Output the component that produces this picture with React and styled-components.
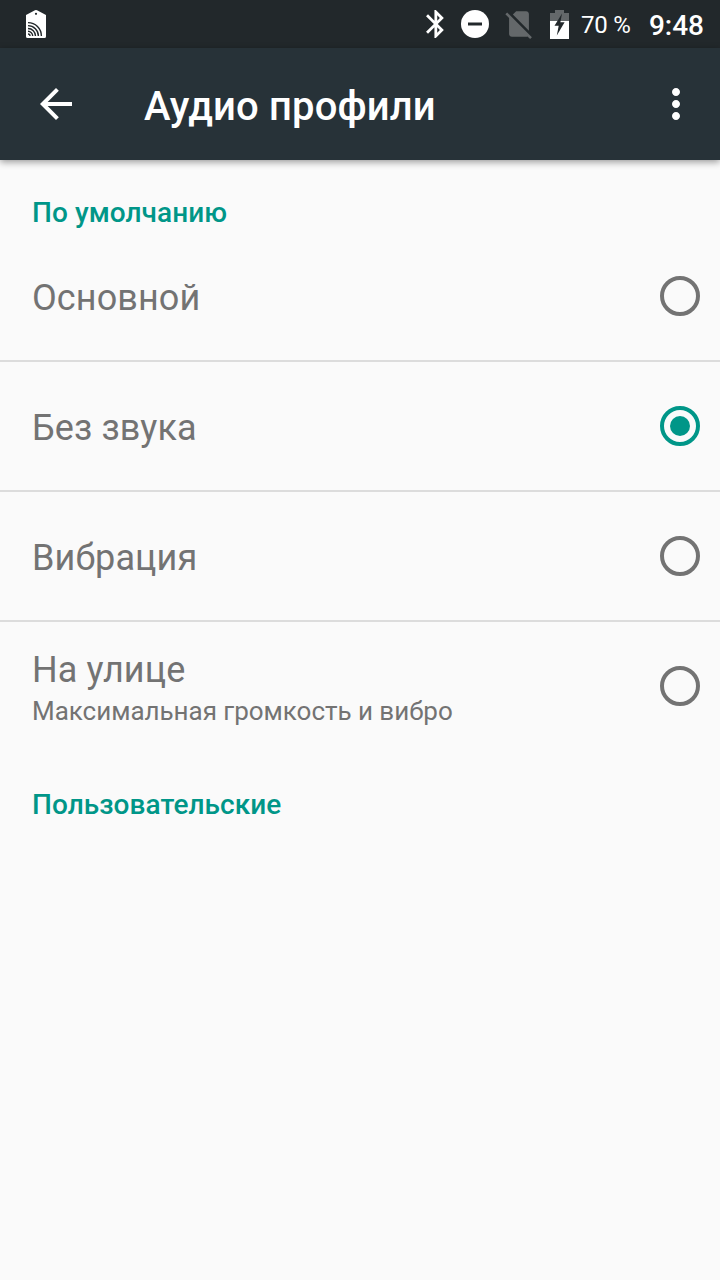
import React, { useState } from 'react'
import styled, { createGlobalStyle } from 'styled-components'


const GlobalStyle = createGlobalStyle`
    * {
        box-sizing: border-box;
    }
    body {
        margin: 0;
        background-color: #fafafa;
        font-family: Roboto, "Noto Sans", sans-serif;
    }
`;

const Container = styled.div`
    min-height: 100vh;
    background-color: #fafafa;
`;

const StatusBar = styled.div`
    height: 48px;
    padding: 0 16px 0 26px;
    display: flex;
    align-items: center;
    justify-content: space-between;
    background-color: #22282b;
    color: #fff;
`;

const StatusIcons = styled.div`
    display: flex;
    align-items: center;
`;

const Icon = styled.svg`
    display: block;
    flex: none;
    margin-left: ${props => props.$gap || 0}px;
`;

const BatteryLevel = styled.span`
    margin-left: 12px;
    padding-top: 2px;
    width: 50px;
    white-space: nowrap;
    font-size: 24px;
    line-height: 28px;
    letter-spacing: -0.2px;
`;

const Clock = styled.span`
    margin-left: 18px;
    padding-top: 2px;
    font-size: 28px;
    font-weight: 500;
    line-height: 33px;
`;

const Toolbar = styled.header`
    position: relative;
    height: 112px;
    padding: 0 38px 0 40px;
    display: flex;
    align-items: center;
    background-color: #273238;
    box-shadow: 0 2px 7px rgba(0, 0, 0, 0.4);
`;

const IconButton = styled.button`
    padding: 0;
    border: none;
    background: none;
    cursor: pointer;
`;

const Title = styled.h1`
    flex: 1;
    margin: 0;
    padding: 6px 0 0 72px;
    color: #fff;
    font-size: 40px;
    font-weight: 500;
    line-height: 46px;
    letter-spacing: 0.15px;
`;

const SectionTitle = styled.h2`
    height: 72px;
    margin: 0;
    padding: 36px 32px 0;
    color: #009688;
    font-size: 28px;
    font-weight: 500;
    line-height: 33px;
    letter-spacing: 0.06px;
`;

const Row = styled.div`
    height: 130px;
    padding: 0 20px 0 32px;
    display: flex;
    align-items: center;
    border-bottom: 2px solid ${props => props.$last ? 'transparent' : '#dcdcdc'};
    cursor: pointer;
`;

const Info = styled.div`
    flex: 1;
    padding-top: 3px;
    color: #737373;
`;

const Name = styled.div`
    font-size: 36px;
    line-height: 42px;
    letter-spacing: 0.1px;
`;

const Summary = styled.div`
    margin-top: 4px;
    font-size: 26px;
    line-height: 32px;
    letter-spacing: -0.03px;
`;

const Radio = styled.span`
    width: 40px;
    height: 40px;
    display: flex;
    align-items: center;
    justify-content: center;
    border: 4px solid ${props => props.$checked ? '#009688' : '#737373'};
    border-radius: 50%;
`;

const Dot = styled.span`
    width: 20px;
    height: 20px;
    border-radius: 50%;
    background-color: #009688;
`;

const profiles = [
  { id: 1, name: 'Основной' },
  { id: 2, name: 'Без звука' },
  { id: 3, name: 'Вибрация' },
  { id: 4, name: 'На улице', summary: 'Максимальная громкость и вибро' },
];

const TagIcon = () => (
  <Icon width="20" height="28" viewBox="0 0 20 28">
    <path fill="#fff" d="M0 5L8 .8Q10-.6 12 .8L20 5V26.5Q20 28 18.5 28H1.5Q0 28 0 26.5z" />
    <circle cx="10" cy="3.8" r="1.1" fill="#22282b" />
    <g fill="none" stroke="#22282b" strokeWidth="1.4">
      <path d="M2 12.6A13.4 13.4 0 0 1 15.4 26" />
      <path d="M2 15.6A10.4 10.4 0 0 1 12.4 26" />
      <path d="M2 18.5A7.5 7.5 0 0 1 9.5 26" />
      <path d="M2 21.3A4.7 4.7 0 0 1 6.7 26" />
      <path d="M2 24A2 2 0 0 1 4 26" />
    </g>
  </Icon>
);

const BluetoothIcon = () => (
  <Icon width="18" height="28" viewBox="5 2 12.8 20">
    <path fill="#fff" d="M17.71 7.71L12 2h-1v7.59L6.41 5 5 6.41 10.59 12 5 17.59 6.41 19 11 14.41V22h1l5.71-5.71-4.3-4.29 4.3-4.29zM13 5.83l1.88 1.88L13 9.59V5.83zm1.88 10.46L13 18.17v-3.76l1.88 1.88z" />
  </Icon>
);

const DoNotDisturbIcon = () => (
  <Icon $gap={17} width="28" height="28" viewBox="0 0 28 28">
    <circle cx="14" cy="14" r="14" fill="#fff" />
    <path fill="#22282b" d="M7 12.5h14v3H7z" />
  </Icon>
);

const NoSimIcon = () => (
  <Icon $gap={13} width="34" height="34" viewBox="0 0 24 24">
    <path fill="#64686a" d="M18.99 5c0-1.1-.89-2-1.99-2h-7L7.66 5.34 19 16.68 18.99 5zM3.65 3.88L2.38 5.15 5 7.77V19c0 1.1.9 2 2 2h10.01c.35 0 .67-.1.96-.26l1.88 1.88 1.27-1.27L3.65 3.88z" />
  </Icon>
);

const BatteryIcon = () => (
  <Icon $gap={14} width="19" height="29" viewBox="0 0 19 29">
    <path fill="#64686a" d="M5 0h9v3h5v8H0V3h5z" />
    <path fill="#fff" d="M0 11h19v18H0z" />
    <path fill="#22282b" d="M12 3.5L4.5 15.8H8.7L6.8 25.5L14.6 12.2H10.4z" />
  </Icon>
);

const App = () => {
  const [selected, setSelected] = useState(2);

  return (
    <Container>
        <GlobalStyle/>
        <StatusBar>
            <TagIcon/>
            <StatusIcons>
                <BluetoothIcon/>
                <DoNotDisturbIcon/>
                <NoSimIcon/>
                <BatteryIcon/>
                <BatteryLevel>70 %</BatteryLevel>
                <Clock>9:48</Clock>
            </StatusIcons>
        </StatusBar>
        <Toolbar>
            <IconButton>
                <Icon width="32" height="32" viewBox="4 4 16 16">
                    <path fill="#fff" d="M20 11H7.83l5.59-5.59L12 4l-8 8 8 8 1.41-1.41L7.83 13H20v-2z" />
                </Icon>
            </IconButton>
            <Title>Аудио профили</Title>
            <IconButton>
                <Icon width="12" height="32" viewBox="9 4 6 16">
                    <path fill="#fff" d="M12 8c1.1 0 2-.9 2-2s-.9-2-2-2-2 .9-2 2 .9 2 2 2zm0 2c-1.1 0-2 .9-2 2s.9 2 2 2 2-.9 2-2-.9-2-2-2zm0 6c-1.1 0-2 .9-2 2s.9 2 2 2 2-.9 2-2-.9-2-2-2z" />
                </Icon>
            </IconButton>
        </Toolbar>
        <SectionTitle>По умолчанию</SectionTitle>
        {profiles.map((item, index) => (
            <Row key={item.id} $last={index === profiles.length - 1} onClick={() => setSelected(item.id)}>
                <Info>
                    <Name>{item.name}</Name>
                    {item.summary && <Summary>{item.summary}</Summary>}
                </Info>
                <Radio $checked={selected === item.id}>
                    {selected === item.id && <Dot/>}
                </Radio>
            </Row>
        ))}
        <SectionTitle>Пользовательские</SectionTitle>
    </Container>
  )
};

export default App;
